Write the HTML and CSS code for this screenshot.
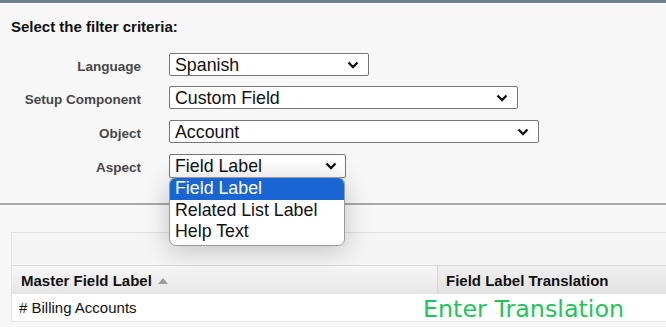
FILE: index.html
```html
<!DOCTYPE html>
<html>
<head>
<meta charset="utf-8">
<link rel="stylesheet" href="styles.css">
</head>
<body>
<div class="topbar"></div>
<section class="filters">
  <h1 class="title">Select the filter criteria:</h1>
  <div class="form">
    <label class="lbl">Language</label>
    <div class="select w-lang"><span>Spanish</span><svg class="chev" viewBox="0 0 12 8"><path d="M1.5 1.5 L6 6 L10.5 1.5" fill="none" stroke="#111" stroke-width="2.3"/></svg></div>
    <label class="lbl">Setup Component</label>
    <div class="select w-setup"><span>Custom Field</span><svg class="chev" viewBox="0 0 12 8"><path d="M1.5 1.5 L6 6 L10.5 1.5" fill="none" stroke="#111" stroke-width="2.3"/></svg></div>
    <label class="lbl">Object</label>
    <div class="select w-obj"><span>Account</span><svg class="chev" viewBox="0 0 12 8"><path d="M1.5 1.5 L6 6 L10.5 1.5" fill="none" stroke="#111" stroke-width="2.3"/></svg></div>
    <label class="lbl">Aspect</label>
    <div class="aspect-wrap">
      <div class="select w-aspect"><span>Field Label</span><svg class="chev" viewBox="0 0 12 8"><path d="M1.5 1.5 L6 6 L10.5 1.5" fill="none" stroke="#111" stroke-width="2.3"/></svg></div>
      <ul class="menu">
        <li class="active">Field Label</li>
        <li>Related List Label</li>
        <li>Help Text</li>
      </ul>
    </div>
  </div>
</section>
<section class="results">
  <div class="panel">
    <div class="panel-top"></div>
    <div class="thead">
      <div class="th th-master">Master Field Label <svg class="sort" viewBox="0 0 10 6"><path d="M5 0 L10 6 L0 6 Z" fill="#9c9c9c"/></svg></div>
      <div class="th th-trans">Field Label Translation</div>
    </div>
    <div class="trow">
      <div class="td td-master"># Billing Accounts</div>
      <div class="td td-trans">Enter Translation</div>
    </div>
  </div>
</section>
</body>
</html>
```

FILE: styles.css
```css
* { box-sizing: border-box; }
html, body { margin: 0; padding: 0; }
body {
  background: #f7f7f7;
  font-family: "Liberation Sans", Arial, sans-serif;
  color: #111;
  width: 666px;
  height: 327px;
  overflow: hidden;
}
.topbar { height: 3px; background: #6f7f94; }
.filters {
  padding: 15px 0 0 11px;
  height: 202px;
  border-bottom: 2px solid #a9a9a9;
}
.title {
  margin: 0;
  font-size: 15px;
  font-weight: bold;
  line-height: 17px;
  color: #111;
}
.form {
  margin-top: 18px;
  display: grid;
  grid-template-columns: 130px auto;
  column-gap: 28px;
  row-gap: 10px;
  align-items: center;
  justify-items: start;
}
.lbl {
  justify-self: end;
  font-size: 13.5px;
  font-weight: bold;
  color: #474747;
  padding-top: 4px;
}
.select {
  height: 23px;
  background: #fff;
  border: 1px solid #767676;
  border-radius: 2px;
  display: flex;
  align-items: center;
  justify-content: space-between;
  padding: 0 9px 0 5px;
  font-size: 17.8px;
  line-height: 20px;
  color: #111;
}
.chev { width: 12px; height: 8px; }
.w-lang { width: 200px; }
.w-setup { width: 349px; }
.w-obj { width: 370px; margin-top: 1px; }
.w-aspect { width: 177px; height: 24px; padding-right: 8px; }
.aspect-wrap { position: relative; margin-top: 1px; }
.menu {
  position: absolute;
  left: 0;
  top: 23px;
  width: 176px;
  margin: 0;
  padding: 0 0 2px;
  list-style: none;
  background: #fff;
  border: 1px solid #9a9a9a;
  border-radius: 7px;
  overflow: hidden;
  box-shadow: 0 4px 26px rgba(0, 0, 0, 0.22);
  z-index: 5;
}
.menu li {
  font-size: 17.8px;
  line-height: 21.5px;
  padding-left: 5px;
  color: #111;
}
.menu li.active { background: #1a65d4; color: #fff; }
.results { padding: 27px 0 0 11px; }
.panel {
  border-left: 1px solid #e0e0e0;
  border-top: 1px solid #e0e0e0;
  background: #f4f4f4;
}
.panel-top { height: 33px; border-bottom: 1px solid #dcdcdc; }
.thead {
  display: flex;
  height: 28px;
  background: linear-gradient(#f6f6f6, #e6e6e6);
}
.th {
  font-size: 15px;
  font-weight: bold;
  color: #111;
  display: flex;
  align-items: center;
}
.th-master { width: 425px; padding-left: 9px; }
.sort { width: 10px; height: 6px; margin-left: 6px; margin-top: 1px; }
.th-trans {
  flex: 1;
  padding-left: 8px;
  border-left: 1px solid #d6d6d6;
  background: linear-gradient(#f0f0f0, #e2e2e2);
}
.trow {
  display: flex;
  height: 28px;
  background: #fff;
  border-bottom: 1px solid #e6e6e6;
  align-items: center;
}
.td-master { width: 411px; padding-left: 7px; font-size: 15px; color: #111; }
.td-trans {
  font-family: "DejaVu Sans", Verdana, sans-serif;
  font-size: 23.8px;
  line-height: 26px;
  color: #22c55a;
  margin-top: 2px;
}
```
